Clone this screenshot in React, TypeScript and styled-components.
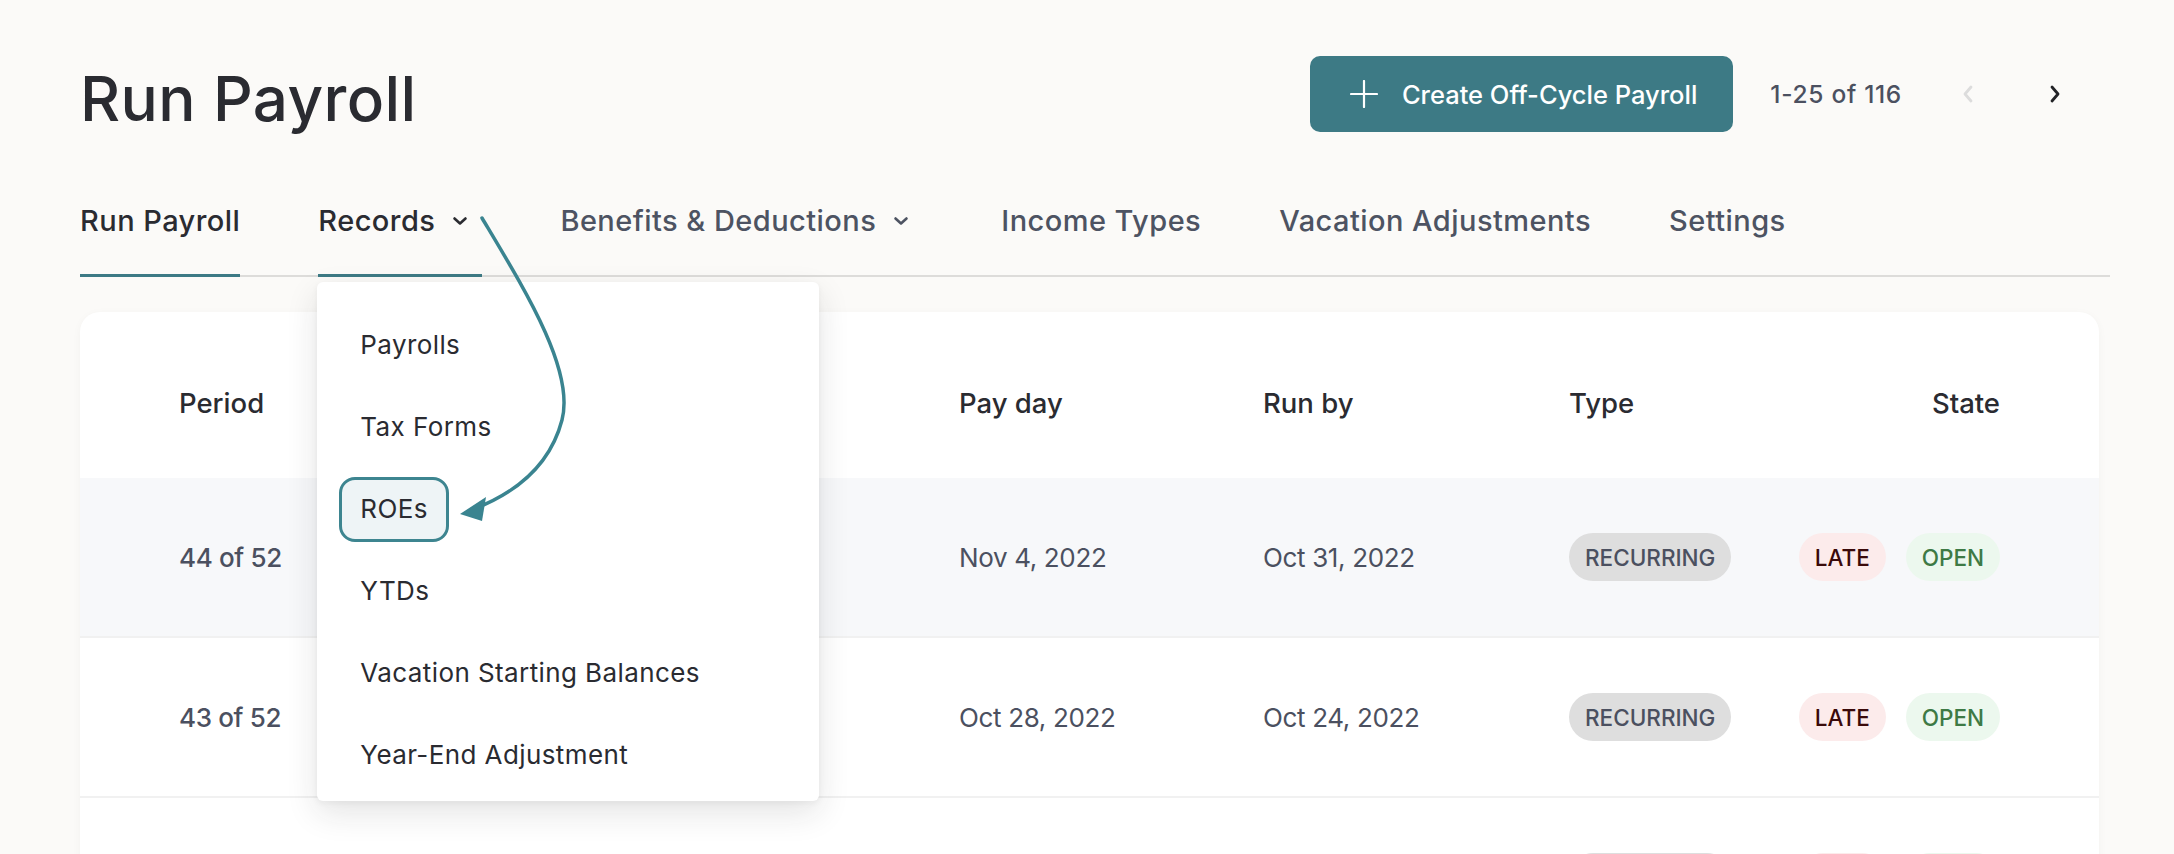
import React from 'react';
import styled, { createGlobalStyle, css } from 'styled-components';

const GlobalStyle = createGlobalStyle`
  * { box-sizing: border-box; }
  body {
    margin: 0;
    background: #fbfaf8;
    font-family: Inter, 'Noto Sans', sans-serif;
    color: #2a2b31;
  }
`;

const Screen = styled.div`
  position: relative;
  width: 2174px;
  height: 854px;
  overflow: hidden;
  background: #fbfaf8;
`;

const Page = styled.main`
  padding: 56px 64px 0 80px;
`;

const Header = styled.header`
  display: flex;
  justify-content: space-between;
  align-items: center;
  height: 76px;
  padding-right: 33px;
`;

const Title = styled.h1`
  margin: 9px 0 0;
  font-size: 62px;
  line-height: 1;
  font-weight: 500;
  letter-spacing: 0.4px;
  color: #2a2b31;
`;

const Actions = styled.div`
  display: flex;
  align-items: center;
  height: 100%;
`;

const PrimaryButton = styled.button`
  display: flex;
  align-items: center;
  gap: 24px;
  height: 76px;
  padding: 0 36px 0 40px;
  border: none;
  border-radius: 10px;
  background: #3d7a85;
  color: #fff;
  font-family: inherit;
  font-size: 25.5px;
  font-weight: 500;
  cursor: pointer;
`;

const Count = styled.span`
  margin-left: 37px;
  font-size: 24.5px;
  font-weight: 500;
  letter-spacing: 0.7px;
  color: #4b5060;
`;

const PageButton = styled.button<{ $disabled?: boolean }>`
  display: flex;
  align-items: center;
  justify-content: center;
  width: 44px;
  height: 44px;
  padding: 0;
  border: none;
  background: none;
  color: ${p => (p.$disabled ? '#dcdcdc' : '#222327')};
  margin-left: ${p => (p.$disabled ? '44px' : '43px')};
`;

const Nav = styled.nav`
  display: flex;
  gap: 78px;
  margin-top: 74px;
  border-bottom: 2px solid #dddcda;
`;

const Tab = styled.div<{ $active?: boolean; $menu?: boolean }>`
  position: relative;
  display: flex;
  align-items: center;
  gap: 17px;
  height: 71px;
  margin-bottom: -2px;
  padding: 0 ${p => (p.$menu ? '14px' : '0')} 39px 0;
  font-size: 29px;
  line-height: 1;
  font-weight: 500;
  letter-spacing: 0.45px;
  color: ${p => (p.$active ? '#2a2b31' : '#4d5362')};
  border-bottom: 3px solid ${p => (p.$active ? '#3d7a85' : 'transparent')};
`;

const Menu = styled.div`
  position: absolute;
  z-index: 5;
  top: calc(100% + 8px);
  left: -1px;
  width: 502px;
  padding: 22px 0 5px;
  background: #fff;
  border-radius: 6px;
  letter-spacing: 0;
  box-shadow: 0 12px 32px rgba(30, 30, 30, 0.12), 0 2px 6px rgba(30, 30, 30, 0.05);
`;

const MenuItem = styled.div`
  display: flex;
  align-items: center;
  height: 82px;
  padding-left: 22px;
`;

const MenuLabel = styled.span<{ $highlight?: boolean }>`
  display: inline-flex;
  align-items: center;
  height: 65px;
  padding: 0 18px;
  border: 3px solid transparent;
  border-radius: 16px;
  font-size: 26px;
  font-weight: 400;
  letter-spacing: 0.4px;
  color: #2a2b31;
  ${p =>
    p.$highlight &&
    css`
      border-color: #3d8590;
      background: #eef4f6;
    `}
`;

const Card = styled.section`
  margin: 35px 11px 0 0;
  background: #fff;
  border-radius: 20px;
  box-shadow: 0 2px 10px rgba(0, 0, 0, 0.035);
  overflow: hidden;
`;

const gridCols = css`
  display: grid;
  grid-template-columns: 280px 500px 304px 306px 1fr auto;
  align-items: center;
  padding: 0 99px;
`;

const HeadRow = styled.div`
  ${gridCols};
  height: 166px;
  padding-top: 16px;
`;

const HeadCell = styled.div<{ $end?: boolean }>`
  font-size: 27.5px;
  font-weight: 500;
  color: #2a2b31;
  justify-self: ${p => (p.$end ? 'end' : 'start')};
`;

const Row = styled.div<{ $shaded?: boolean }>`
  ${gridCols};
  height: 160px;
  border-bottom: 2px solid #f1f1f1;
  background: ${p => (p.$shaded ? '#f7f8fa' : '#fff')};
`;

const Cell = styled.div<{ $strong?: boolean }>`
  font-size: 26px;
  letter-spacing: -0.35px;
  font-weight: ${p => (p.$strong ? 500 : 400)};
  color: #4b5060;
`;

const BadgeGroup = styled.div`
  display: flex;
  gap: 20px;
  justify-self: end;
`;

const tones = {
  gray: css`
    background: #dedede;
    color: #4b5060;
  `,
  red: css`
    background: #fcebeb;
    color: #3a0a0a;
  `,
  green: css`
    background: #ecf8ee;
    color: #3e7a45;
  `,
};

const Badge = styled.span<{ $tone: keyof typeof tones }>`
  display: inline-flex;
  align-items: center;
  height: 48px;
  padding: 0 16px;
  border-radius: 24px;
  font-size: 22.5px;
  font-weight: 500;
  ${p => tones[p.$tone]};
`;

const Overlay = styled.svg`
  position: absolute;
  top: 0;
  left: 0;
  z-index: 10;
  pointer-events: none;
`;

const Chevron = () => (
  <svg width="16" height="10" viewBox="0 0 16 10" fill="none">
    <path d="M2.5 2.5 L8 7.5 L13.5 2.5" stroke="currentColor" strokeWidth="2.6" strokeLinecap="round" strokeLinejoin="round" />
  </svg>
);

const rows = [
  { period: '44 of 52', payDay: 'Nov 4, 2022', runBy: 'Oct 31, 2022' },
  { period: '43 of 52', payDay: 'Oct 28, 2022', runBy: 'Oct 24, 2022' },
  { period: '42 of 52', payDay: 'Oct 21, 2022', runBy: 'Oct 17, 2022' },
];

const menuItems = ['Payrolls', 'Tax Forms', 'ROEs', 'YTDs', 'Vacation Starting Balances', 'Year-End Adjustment'];

export default function App() {
  return (
    <Screen>
      <GlobalStyle />
      <Page>
        <Header>
          <Title>Run Payroll</Title>
          <Actions>
            <PrimaryButton>
              <svg width="28" height="28" viewBox="0 0 28 28" fill="none">
                <path d="M14 1 V27 M1 14 H27" stroke="#fff" strokeWidth="2.2" strokeLinecap="round" />
              </svg>
              Create Off-Cycle Payroll
            </PrimaryButton>
            <Count>1-25 of 116</Count>
            <PageButton $disabled aria-label="Previous">
              <svg width="14" height="18" viewBox="0 0 14 18" fill="none">
                <path d="M10 2 L4 9 L10 16" stroke="currentColor" strokeWidth="2.8" strokeLinecap="round" strokeLinejoin="round" />
              </svg>
            </PageButton>
            <PageButton aria-label="Next">
              <svg width="14" height="18" viewBox="0 0 14 18" fill="none">
                <path d="M4 2 L10 9 L4 16" stroke="currentColor" strokeWidth="2.8" strokeLinecap="round" strokeLinejoin="round" />
              </svg>
            </PageButton>
          </Actions>
        </Header>

        <Nav>
          <Tab $active>Run Payroll</Tab>
          <Tab $active $menu>
            <span>Records</span>
            <Chevron />
            <Menu>
              {menuItems.map(item => (
                <MenuItem key={item}>
                  <MenuLabel $highlight={item === 'ROEs'}>{item}</MenuLabel>
                </MenuItem>
              ))}
            </Menu>
          </Tab>
          <Tab $menu>
            <span>Benefits &amp; Deductions</span>
            <Chevron />
          </Tab>
          <Tab>Income Types</Tab>
          <Tab>Vacation Adjustments</Tab>
          <Tab>Settings</Tab>
        </Nav>

        <Card>
          <HeadRow>
            <HeadCell>Period</HeadCell>
            <HeadCell />
            <HeadCell>Pay day</HeadCell>
            <HeadCell>Run by</HeadCell>
            <HeadCell>Type</HeadCell>
            <HeadCell $end>State</HeadCell>
          </HeadRow>
          {rows.map((r, i) => (
            <Row key={r.period} $shaded={i === 0}>
              <Cell $strong>{r.period}</Cell>
              <Cell />
              <Cell>{r.payDay}</Cell>
              <Cell>{r.runBy}</Cell>
              <div>
                <Badge $tone="gray">RECURRING</Badge>
              </div>
              <BadgeGroup>
                <Badge $tone="red">LATE</Badge>
                <Badge $tone="green">OPEN</Badge>
              </BadgeGroup>
            </Row>
          ))}
        </Card>
      </Page>

      <Overlay width="2174" height="854" viewBox="0 0 2174 854">
        <path
          d="M482 218 C525 290, 575 370, 562 420 C549 470, 510 495, 474 509"
          stroke="#3a8490"
          strokeWidth="3.5"
          fill="none"
          strokeLinecap="round"
        />
        <path d="M460 514 L486 497 L482 521 Z" fill="#3a8490" />
      </Overlay>
    </Screen>
  );
}
